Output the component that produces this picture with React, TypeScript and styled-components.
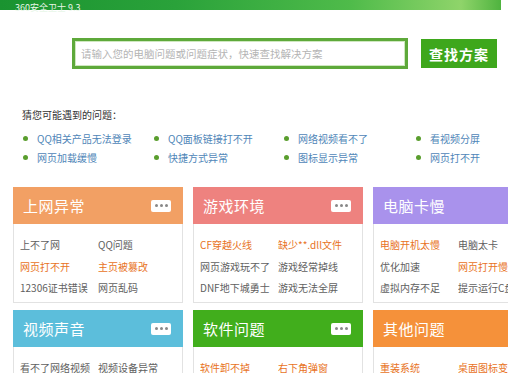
import styled, { createGlobalStyle } from "styled-components";

const GlobalStyle = createGlobalStyle`
  html, body {
    margin: 0;
    padding: 0;
    background: #ffffff;
    overflow: hidden;
  }
  body {
    font-family: "Noto Sans CJK SC", "Noto Sans", "Liberation Sans", sans-serif;
  }
`;

const Page = styled.div`
  width: 508px;
  height: 373px;
  overflow: hidden;
  background: #fff;
`;

const Banner = styled.div`
  height: 10px;
  margin-right: 7px;
  background: linear-gradient(90deg, #1a9330 0%, #2aa23a 35%, #4fbb4a 70%, #8fd46a 92%, #4fb33f 100%);
  position: relative;
`;

const BannerText = styled.span`
  position: absolute;
  left: 15px;
  top: 2px;
  font-size: 9px;
  line-height: 11px;
  color: #e8f6e8;
  white-space: nowrap;
`;

const SearchRow = styled.div`
  display: flex;
  align-items: flex-start;
  gap: 13px;
  margin-top: 28px;
  padding-left: 72px;
`;

const SearchBox = styled.div`
  box-sizing: border-box;
  width: 336px;
  height: 31px;
  border: 3px solid #5ea93a;
  box-shadow: inset 0 0 0 1px #cfe8c0;
  background: #fff;
  display: flex;
  align-items: center;
  padding-left: 6px;
  font-size: 10.5px;
  color: #b4b4b4;
  white-space: nowrap;
`;

const SearchButton = styled.button`
  width: 76px;
  height: 29px;
  margin-top: 1px;
  border: none;
  background: #3ea71c;
  color: #fff;
  font-family: inherit;
  font-size: 14px;
  font-weight: bold;
  letter-spacing: 1px;
  padding: 0;
`;

const Section = styled.div`
  padding-left: 22px;
  margin-top: 39px;
`;

const SectionTitle = styled.div`
  font-size: 10px;
  line-height: 14px;
  color: #333;
`;

const Questions = styled.div`
  display: grid;
  grid-template-columns: 131px 130px 132px 100px;
  grid-auto-rows: 19px;
  margin-top: 7px;
  padding-left: 1px;
`;

const Question = styled.div`
  display: flex;
  align-items: center;
  font-size: 10px;
  color: #4f86b8;
  white-space: nowrap;
  &::before {
    content: "";
    width: 5px;
    height: 5px;
    border-radius: 50%;
    background: #5a9e2e;
    margin-right: 9px;
  }
`;

const Cards = styled.div`
  display: grid;
  grid-template-columns: repeat(3, 170px);
  column-gap: 10px;
  row-gap: 7px;
  margin-top: 20px;
  padding-left: 13px;
`;

const Card = styled.div`
  width: 170px;
`;

const CardHead = styled.div<{ $bg: string }>`
  height: 37px;
  background: ${(p) => p.$bg};
  display: flex;
  align-items: center;
  justify-content: space-between;
  padding: 0 12px 0 10px;
`;

const CardTitle = styled.span`
  font-size: 15px;
  color: #fff;
  letter-spacing: 0.5px;
`;

const More = styled.span`
  width: 20px;
  height: 12px;
  border-radius: 2px;
  background: #fff;
  display: flex;
  align-items: center;
  justify-content: center;
  gap: 2px;
  i {
    width: 3px;
    height: 3px;
    border-radius: 50%;
    background: #888;
  }
`;

const CardBody = styled.div`
  box-sizing: border-box;
  height: 79px;
  border: 1px solid #e2e2e2;
  border-top: none;
  padding: 10px 0 0 6px;
  display: grid;
  grid-template-columns: 78px 84px;
  grid-auto-rows: 21.5px;
`;

const Item = styled.span<{ $hot?: boolean }>`
  font-size: 10px;
  line-height: 21.5px;
  color: ${(p) => (p.$hot ? "#e8731e" : "#606060")};
  white-space: nowrap;
  overflow: hidden;
`;

type Entry = { text: string; hot?: boolean };
type CardData = { title: string; color: string; more: boolean; items: Entry[] };

const cards: CardData[] = [
  {
    title: "上网异常",
    color: "#f2a064",
    more: true,
    items: [
      { text: "上不了网" },
      { text: "QQ问题" },
      { text: "网页打不开", hot: true },
      { text: "主页被篡改", hot: true },
      { text: "12306证书错误" },
      { text: "网页乱码" },
    ],
  },
  {
    title: "游戏环境",
    color: "#ee827f",
    more: true,
    items: [
      { text: "CF穿越火线", hot: true },
      { text: "缺少**.dll文件", hot: true },
      { text: "网页游戏玩不了" },
      { text: "游戏经常掉线" },
      { text: "DNF地下城勇士" },
      { text: "游戏无法全屏" },
    ],
  },
  {
    title: "电脑卡慢",
    color: "#a992ec",
    more: false,
    items: [
      { text: "电脑开机太慢", hot: true },
      { text: "电脑太卡" },
      { text: "优化加速" },
      { text: "网页打开慢", hot: true },
      { text: "虚拟内存不足" },
      { text: "提示运行C盘" },
    ],
  },
  {
    title: "视频声音",
    color: "#5cbedb",
    more: true,
    items: [
      { text: "看不了网络视频" },
      { text: "视频设备异常" },
    ],
  },
  {
    title: "软件问题",
    color: "#41ae1c",
    more: true,
    items: [
      { text: "软件卸不掉", hot: true },
      { text: "右下角弹窗", hot: true },
    ],
  },
  {
    title: "其他问题",
    color: "#f5913a",
    more: false,
    items: [
      { text: "重装系统", hot: true },
      { text: "桌面图标变", hot: true },
    ],
  },
];

const questions = [
  "QQ相关产品无法登录",
  "QQ面板链接打不开",
  "网络视频看不了",
  "看视频分屏",
  "网页加载缓慢",
  "快捷方式异常",
  "图标显示异常",
  "网页打不开",
];

export default function App() {
  return (
    <Page>
      <GlobalStyle />
      <Banner>
        <BannerText>360安全卫士 9.3</BannerText>
      </Banner>
      <SearchRow>
        <SearchBox>请输入您的电脑问题或问题症状，快速查找解决方案</SearchBox>
        <SearchButton>查找方案</SearchButton>
      </SearchRow>
      <Section>
        <SectionTitle>猜您可能遇到的问题：</SectionTitle>
        <Questions>
          {questions.map((q) => (
            <Question key={q}>{q}</Question>
          ))}
        </Questions>
      </Section>
      <Cards>
        {cards.map((c) => (
          <Card key={c.title}>
            <CardHead $bg={c.color}>
              <CardTitle>{c.title}</CardTitle>
              {c.more && (
                <More>
                  <i />
                  <i />
                  <i />
                </More>
              )}
            </CardHead>
            <CardBody>
              {c.items.map((it) => (
                <Item key={it.text} $hot={it.hot}>
                  {it.text}
                </Item>
              ))}
            </CardBody>
          </Card>
        ))}
      </Cards>
    </Page>
  );
}
